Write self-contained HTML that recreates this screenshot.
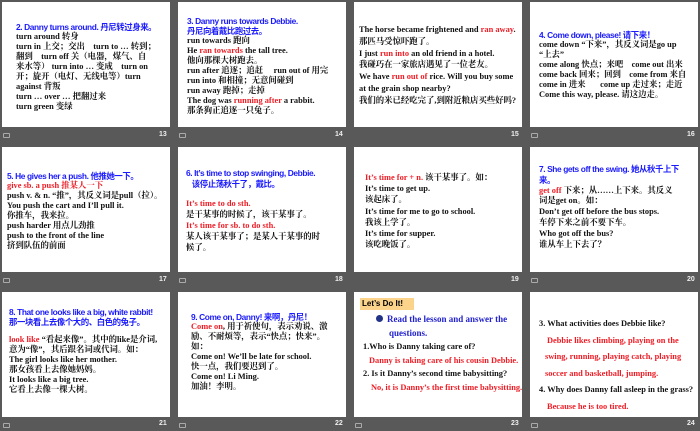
<!DOCTYPE html>
<html><head><meta charset="utf-8"><style>
body{margin:0;width:700px;height:431px;background:#595959;position:relative;overflow:hidden;font-family:"Liberation Serif","Noto Serif CJK SC",serif;}
.s{position:absolute;width:168px;height:125px;background:#fff;box-sizing:border-box;overflow:hidden;}
.t{position:absolute;left:0;right:0;font-weight:bold;font-size:8.4px;line-height:10px;color:#111;white-space:nowrap;}
.b{color:#1a1aff;font-family:"Liberation Sans","Noto Sans CJK SC",sans-serif;letter-spacing:-0.4px;}
.r{color:#ee1c25;}
.n{position:absolute;color:#eee;font-size:7px;font-weight:bold;font-family:"Liberation Sans",sans-serif;}
.i{position:absolute;width:5px;height:3px;border:1px solid #aaa;border-radius:1px;}
p{margin:0;}
</style></head><body>

<div class="s" style="left:2px;top:2px"><div class="t" style="left:14px;top:20px">
<p class="b">2. Danny turns around. 丹尼转过身来。</p>
<p>turn around 转身</p>
<p>turn in 上交；交出 &nbsp;&nbsp; turn to … 转到；</p>
<p>翻到 &nbsp;&nbsp; turn off 关（电器，煤气、自</p>
<p>来水等） turn into … 变成 &nbsp;&nbsp; turn on</p>
<p>开；旋开（电灯、无线电等）turn</p>
<p>against 背叛</p>
<p>turn … over … 把翻过来</p>
<p>turn green 变绿</p></div></div>

<div class="s" style="left:178px;top:2px"><div class="t" style="left:9px;top:14px">
<p class="b">3. Danny runs towards Debbie.</p>
<p class="b">丹尼向着戴比跑过去。</p>
<p>run towards 跑向</p>
<p>He <span class="r">ran towards</span> the tall tree.</p>
<p>他向那棵大树跑去。</p>
<p>run after 追逐；追赶 &nbsp;&nbsp;&nbsp; run out of 用完</p>
<p>run into 和相撞；无意间碰到</p>
<p>run away 跑掉；走掉</p>
<p>The dog was <span class="r">running after</span> a rabbit.</p>
<p>那条狗正追逐一只兔子。</p></div></div>

<div class="s" style="left:354px;top:2px"><div class="t" style="left:5px;top:22px;line-height:11.8px">
<p>The horse became frightened and <span class="r">ran away</span>.</p>
<p>那匹马受惊吓跑了。</p>
<p>I just <span class="r">run into</span> an old friend in a hotel.</p>
<p>我碰巧在一家旅店遇见了一位老友。</p>
<p>We have <span class="r">run out of</span> rice. Will you buy some</p>
<p>at the grain shop nearby?</p>
<p>我们的米已经吃完了,到附近粮店买些好吗?</p></div></div>

<div class="s" style="left:530px;top:2px"><div class="t" style="left:9px;top:28px">
<p class="b">4. Come down, please! 请下来！</p>
<p>come down “下来”，其反义词是go up</p>
<p>“上去”</p>
<p>come along 快点；来吧 &nbsp;&nbsp; come out 出来</p>
<p>come back 回来；回到 &nbsp;&nbsp; come from 来自</p>
<p>come in 进来 &nbsp;&nbsp;&nbsp;&nbsp;&nbsp; come up 走过来；走近</p>
<p>Come this way, please. 请这边走。</p></div></div>

<div class="s" style="left:2px;top:147px"><div class="t" style="left:5px;top:24px">
<p class="b">5. He gives her a push. 他推她一下。</p>
<p class="r">give sb. a push 推某人一下</p>
<p>push v. &amp; n. “推”，其反义词是pull（拉）。</p>
<p>You push the cart and I’ll pull it.</p>
<p>你推车，我来拉。</p>
<p>push harder 用点儿劲推</p>
<p>push to the front of the line</p>
<p>挤到队伍的前面</p></div></div>

<div class="s" style="left:178px;top:147px"><div class="t" style="left:8px;top:21px;line-height:11px">
<p class="b">6. It’s time to stop swinging, Debbie.</p>
<p class="b">&nbsp;&nbsp;&nbsp;该停止荡秋千了，戴比。</p>
<p style="margin-top:8px" class="r">It’s time to do sth.</p>
<p>是干某事的时候了，该干某事了。</p>
<p class="r">It’s time for sb. to do sth.</p>
<p>某人该干某事了；是某人干某事的时</p>
<p>候了。</p></div></div>

<div class="s" style="left:354px;top:147px"><div class="t" style="left:11px;top:25px;line-height:11.2px">
<p><span class="r">It’s time for + n.</span> 该干某事了。如：</p>
<p>It’s time to get up.</p>
<p>该起床了。</p>
<p>It’s time for me to go to school.</p>
<p>我该上学了。</p>
<p>It’s time for supper.</p>
<p>该吃晚饭了。</p></div></div>

<div class="s" style="left:530px;top:147px"><div class="t" style="left:9px;top:17px;line-height:10.8px">
<p class="b">7. She gets off the swing. 她从秋千上下</p>
<p class="b">来。</p>
<p><span class="r">get off</span> 下来；从……上下来。其反义</p>
<p>词是get on。如：</p>
<p>Don’t get off before the bus stops.</p>
<p>车停下来之前不要下车。</p>
<p>Who got off the bus?</p>
<p>谁从车上下去了？</p></div></div>

<div class="s" style="left:2px;top:292px"><div class="t" style="left:7px;top:15px">
<p class="b">8. That one looks like a big, white rabbit!</p>
<p class="b">那一块看上去像个大的、白色的兔子。</p>
<p style="margin-top:8px"><span class="r">look like</span> “看起来像”。其中的like是介词,</p>
<p>意为“像”，其后跟名词或代词。如：</p>
<p>The girl looks like her mother.</p>
<p>那女孩看上去像她妈妈。</p>
<p>It looks like a big tree.</p>
<p>它看上去像一棵大树。</p></div></div>

<div class="s" style="left:178px;top:292px"><div class="t" style="left:13px;top:20px">
<p class="b">9. Come on, Danny! 来啊，丹尼！</p>
<p><span class="r">Come on</span>, 用于祈使句，表示劝说、激</p>
<p>励、不耐烦等，表示“快点；快来”。</p>
<p>如：</p>
<p>Come on! We’ll be late for school.</p>
<p>快一点，我们要迟到了。</p>
<p>Come on! Li Ming.</p>
<p>加油！李明。</p></div></div>

<div class="s" style="left:354px;top:292px">
<div style="position:absolute;left:6px;top:6px;width:52px;height:12px;background:#fbd38a;font:bold 8px 'Liberation Sans',sans-serif;line-height:12px;padding-left:2px">Let’s Do It!</div>
<div class="t" style="left:9px;top:21px;line-height:13.5px">
<p style="color:#2222cc;font-size:9px;padding-left:13px"><span style="display:inline-block;width:7px;height:7px;border-radius:50%;background:#223388;margin-right:4px"></span>Read the lesson and answer the</p>
<p style="color:#2222cc;font-size:9px;padding-left:26px">questions.</p>
<p>1.Who is Danny taking care of?</p>
<p class="r" style="padding-left:6px">Danny is taking care of his cousin Debbie.</p>
<p>2. Is it Danny’s second time babysitting?</p>
<p class="r" style="padding-left:8px">No, it is Danny’s the first time babysitting.</p></div></div>

<div class="s" style="left:530px;top:292px"><div class="t" style="left:9px;top:24px;line-height:16.5px">
<p>3. What activities does Debbie like?</p>
<p class="r" style="padding-left:8px">Debbie likes climbing, playing on the</p>
<p class="r" style="padding-left:6px">swing, running, playing catch, playing</p>
<p class="r" style="padding-left:6px">soccer and basketball, jumping.</p>
<p>4. Why does Danny fall asleep in the grass?</p>
<p class="r" style="padding-left:8px">Because he is too tired.</p></div></div>

<div class="n" style="left:159px;top:131px">13</div>
<div class="n" style="left:335px;top:131px">14</div>
<div class="n" style="left:511px;top:131px">15</div>
<div class="n" style="left:687px;top:131px">16</div>
<div class="n" style="left:159px;top:276px">17</div>
<div class="n" style="left:335px;top:276px">18</div>
<div class="n" style="left:511px;top:276px">19</div>
<div class="n" style="left:687px;top:276px">20</div>
<div class="n" style="left:159px;top:420px">21</div>
<div class="n" style="left:335px;top:420px">22</div>
<div class="n" style="left:511px;top:420px">23</div>
<div class="n" style="left:687px;top:420px">24</div>
<div class="i" style="left:3px;top:133px"></div><div class="i" style="left:179px;top:133px"></div><div class="i" style="left:531px;top:133px"></div>
<div class="i" style="left:3px;top:278px"></div><div class="i" style="left:179px;top:278px"></div><div class="i" style="left:531px;top:278px"></div>
<div class="i" style="left:3px;top:423px"></div><div class="i" style="left:179px;top:423px"></div><div class="i" style="left:355px;top:423px"></div><div class="i" style="left:531px;top:423px"></div>
</body></html>
